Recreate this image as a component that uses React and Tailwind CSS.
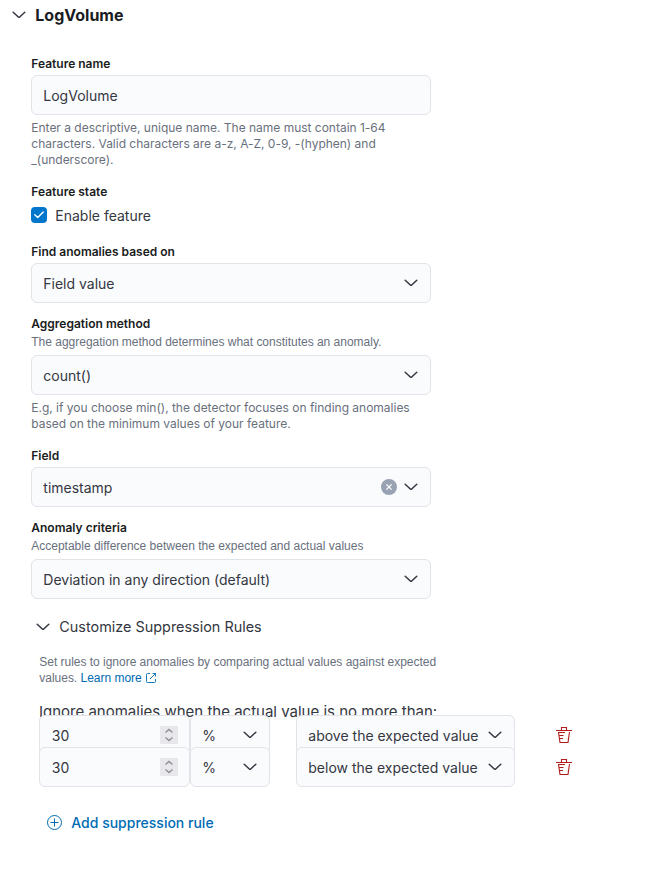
import React from "react";

function Chevron({ className = "" }) {
  return (
    <svg width="16" height="16" viewBox="0 0 16 16" fill="none" className={"shrink-0 " + className}>
      <path d="M2.2 5.2 L7.3 10 Q8 10.6 8.7 10 L13.8 5.2" stroke="#343741" strokeWidth="1.5" strokeLinecap="round" />
    </svg>
  );
}

function Label({ children }) {
  return <div className="h-[18px] pl-[0.3px] text-[12px] leading-[18px] font-semibold text-[#1a1c21]">{children}</div>;
}

function Sub({ children }) {
  return (
    <div className="mt-px h-4 pl-[0.3px] font-['Liberation_Sans',Arial,sans-serif] text-[12px] leading-4 tracking-[-0.01px] text-[#69707d]">
      {children}
    </div>
  );
}

function Help({ children }) {
  return (
    <div className="mt-[5px] pl-[0.3px] text-[12px] leading-4 tracking-[-0.01px] whitespace-nowrap text-[#69707d]">{children}</div>
  );
}

function Control({ children, className = "" }) {
  return (
    <div
      className={
        "flex h-10 items-center rounded-md border border-[#e1e3e8] bg-[#fafbfd] pl-[11.3px] text-[14px] text-[#343741] " +
        className
      }
    >
      {children}
    </div>
  );
}

function Select({ value, clearable, className = "" }) {
  return (
    <Control className={"justify-between pr-[11px] " + className}>
      <span className="whitespace-nowrap">{value}</span>
      <span className="flex items-center gap-[6px]">
        {clearable && (
          <svg width="16" height="16" viewBox="0 0 16 16">
            <circle cx="8" cy="8" r="8" fill="#98a2b3" />
            <path d="M5.4 5.4 L10.6 10.6 M10.6 5.4 L5.4 10.6" stroke="#fff" strokeWidth="1.3" />
          </svg>
        )}
        <Chevron />
      </span>
    </Control>
  );
}

function Trash() {
  return (
    <svg width="16" height="16" viewBox="0 0 16 16" fill="none" stroke="#b11c1c" strokeWidth="1.1" className="shrink-0">
      <path d="M0 3.5 H16 M5.5 3.5 V.5 H10.5 V3.5" />
      <path d="M2 5.5 H9 M2.5 5.5 L4 15.5 H12 L13.5 5 M3 8.5 H7.5 M3.4 11.5 H7" />
    </svg>
  );
}

function Rule({ direction, className = "" }) {
  return (
    <div className={"relative flex h-10 items-center " + className}>
      <Control className="w-[151px] justify-between pr-[11px]">
        <span className="pl-[0.5px]">30</span>
        <svg width="18" height="18" viewBox="0 0 18 18" fill="none">
          <rect width="18" height="18" fill="#e8e8ec" />
          <path d="M5.5 6.5 L9 3.5 L12.5 6.5 M5.5 11.5 L9 14.5 L12.5 11.5" stroke="#8f909b" strokeWidth="1.5" />
        </svg>
      </Control>
      <Select value="%" className="w-20" />
      <Select value={direction} className="ml-[26px] w-[219px]" />
      <div className="ml-[41px] flex">
        <Trash />
      </div>
    </div>
  );
}

export default function App() {
  return (
    <div className="h-[881px] w-[656px] overflow-hidden bg-white pt-[3px] font-[Inter,sans-serif] text-[#343741]">
      <div className="flex h-6 items-center gap-2 pl-[11px]">
        <Chevron />
        <h2 className="pl-[0.3px] text-[16px] leading-6 font-bold text-[#1a1c21]">LogVolume</h2>
      </div>

      <div className="ml-[31px] w-[400px] pt-7">
        <Label>Feature name</Label>
        <Control className="mt-[2px]">LogVolume</Control>
        <Help>
          Enter a descriptive, unique name. The name must contain 1-64
          <br />
          characters. Valid characters are a-z, A-Z, 0-9, -(hyphen) and
          <br />
          _(underscore).
        </Help>

        <div className="pt-[15px]">
          <Label>Feature state</Label>
          <div className="mt-[6px] flex h-4 items-center gap-2 text-[14px]">
            <span className="flex size-4 items-center justify-center rounded bg-[#0077cc]">
              <svg width="10" height="8" viewBox="0 0 10 8" fill="none">
                <path d="M.8 3.8 L3.7 6.6 L9.2 1.1" stroke="#fff" strokeWidth="1.4" strokeLinecap="round" strokeLinejoin="round" />
              </svg>
            </span>
            <span className="pl-[0.3px]">Enable feature</span>
          </div>
        </div>

        <div className="pt-5">
          <Label>Find anomalies based on</Label>
          <Select value="Field value" className="mt-[2px]" />
        </div>

        <div className="pt-3">
          <Label>Aggregation method</Label>
          <Sub>The aggregation method determines what constitutes an anomaly.</Sub>
          <Select value="count()" className="mt-[5px]" />
          <Help>
            E.g, if you choose min(), the detector focuses on finding anomalies
            <br />
            based on the minimum values of your feature.
          </Help>
        </div>

        <div className="pt-[15px]">
          <Label>Field</Label>
          <Select value="timestamp" clearable className="mt-[2px]" />
        </div>

        <div className="pt-3">
          <Label>Anomaly criteria</Label>
          <Sub>Acceptable difference between the expected and actual values</Sub>
          <Select value="Deviation in any direction (default)" className="mt-[5px]" />
        </div>
      </div>

      <div className="mt-4 flex h-6 items-center gap-2 pl-[35px] text-[14.4px]">
        <Chevron />
        <span className="h-6 pl-[0.3px] leading-6 tracking-[0.01px]">Customize Suppression Rules</span>
      </div>

      <div className="ml-[39px] pt-[15px]">
        <p className="pl-[0.3px] font-['Liberation_Sans',Arial,sans-serif] text-[12px] leading-4 tracking-[-0.02px] text-[#69707d]">
          Set rules to ignore anomalies by comparing actual values against expected
          <br />
          <span className="flex items-center">
            values.&nbsp;
            <a className="flex items-center gap-[3px] text-[#006bb4]">
              Learn more
              <svg width="12" height="12" viewBox="0 0 12 12" fill="none" stroke="#006bb4" strokeWidth=".9">
                <path d="M5 1.5 H2.5 Q1.5 1.5 1.5 2.5 V9.5 Q1.5 10.5 2.5 10.5 H9.5 Q10.5 10.5 10.5 9.5 V7 M7.5 1.5 H10.5 V4.5 M10.5 1.5 L5 7" />
              </svg>
            </a>
          </span>
        </p>
        <p className="mt-[14px] h-[15px] text-[15px] leading-6">Ignore anomalies when the actual value is no more than:</p>
        <Rule direction="above the expected value" />
        <Rule direction="below the expected value" className="-mt-2" />
        <div className="mt-6 flex h-6 items-center gap-2 pl-2 text-[14px] font-medium text-[#006bb4]">
          <svg width="16" height="16" viewBox="0 0 16 16" fill="none" stroke="#006bb4">
            <circle cx="7.5" cy="7.5" r="7" />
            <path d="M7.5 3.5 V11.5 M3.5 7.5 H11.5" />
          </svg>
          <span className="h-6 pl-[0.3px] leading-[23px]">Add suppression rule</span>
        </div>
      </div>
    </div>
  );
}
